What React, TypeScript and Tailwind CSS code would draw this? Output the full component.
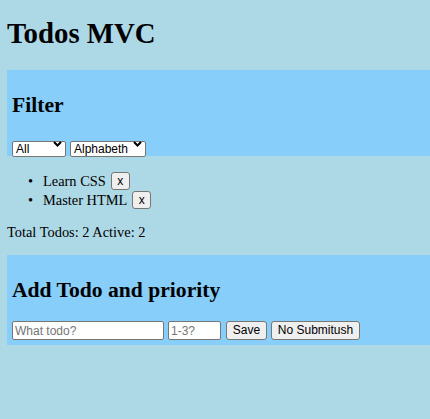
import { useState } from 'react';

interface Todo {
  id: number;
  text: string;
  done: boolean;
}

const controlFont = "font-['Liberation_Sans',Arial,sans-serif] text-[12px]";

function Chevron() {
  return (
    <svg
      className="pointer-events-none absolute right-[4px] top-1/2 -translate-y-1/2"
      width="9"
      height="6"
      viewBox="0 0 9 6"
      fill="none"
    >
      <path d="M1 1l3.5 3.5L8 1" stroke="#000" strokeWidth="2" />
    </svg>
  );
}

function Select({ width, options }: { width: string; options: string[] }) {
  return (
    <div className={`relative ${width} h-[16px]`}>
      <select
        className={`${controlFont} appearance-none w-full h-full leading-[14px] pl-[3px] pr-[14px] bg-white text-black border border-[#767676] rounded-[2px]`}
      >
        {options.map((o) => (
          <option key={o}>{o}</option>
        ))}
      </select>
      <Chevron />
    </div>
  );
}

export default function App() {
  const [todos, setTodos] = useState<Todo[]>([
    { id: 1, text: 'Learn CSS', done: false },
    { id: 2, text: 'Master HTML', done: false },
  ]);

  const removeTodo = (id: number) => {
    setTodos(todos.filter((t) => t.id !== id));
  };

  const active = todos.filter((t) => !t.done).length;

  return (
    <div className="min-h-screen bg-[#add8e6] text-black font-['Liberation_Serif','Times_New_Roman',serif] pt-[17px]">
      <h1 className="ml-[7px] text-[28.8px] leading-[33px] font-bold">Todos MVC</h1>

      <div className="mt-[20px] ml-[7px] bg-[#87cefa] pl-[5px] pt-[23px] pb-[4px]">
        <h2 className="text-[21.6px] leading-[24px] font-bold">Filter</h2>
        <div className="mt-[19px] flex gap-[4px]">
          <Select width="w-[54px]" options={['All', 'Active', 'Done']} />
          <Select width="w-[76px]" options={['Alphabeth', 'Priority']} />
        </div>
      </div>

      <ul className="mt-[15px]">
        {todos.map((todo) => (
          <li key={todo.id} className="flex items-center h-[19px] text-[14.4px]">
            <span className="w-[43px] pl-[28px] leading-[16px]">•</span>
            <span className="leading-[16px]">{todo.text}</span>
            <button
              onClick={() => removeTodo(todo.id)}
              className={`${controlFont} ml-[5px] w-[19px] h-[18px] leading-[16px] bg-[#efefef] border border-[#767676] rounded-[3px] text-black`}
            >
              x
            </button>
          </li>
        ))}
      </ul>

      <p className="mt-[15px] ml-[7px] text-[14.4px] leading-[16px]">
        Total Todos: {todos.length} Active: {active}
      </p>

      <div className="mt-[15px] ml-[7px] bg-[#87cefa] pl-[5px] pt-[23px] pb-[5px]">
        <h2 className="text-[21.6px] leading-[24px] font-bold">Add Todo and priority</h2>
        <form className="mt-[19px] flex items-center gap-[4px]" onSubmit={(e) => e.preventDefault()}>
          <input
            placeholder="What todo?"
            className={`${controlFont} w-[152px] h-[19px] px-[2px] bg-white border border-[#767676] rounded-[2px] placeholder:text-[#757575]`}
          />
          <input
            placeholder="1-3?"
            className={`${controlFont} w-[53px] h-[19px] px-[2px] bg-white border border-[#767676] rounded-[2px] placeholder:text-[#757575]`}
          />
          <button
            type="submit"
            className={`${controlFont} ml-[1px] w-[41px] h-[19px] leading-[17px] bg-[#efefef] border border-[#767676] rounded-[3px]`}
          >
            Save
          </button>
          <button
            type="button"
            className={`${controlFont} w-[89px] h-[19px] leading-[17px] bg-[#efefef] border border-[#767676] rounded-[3px]`}
          >
            No Submitush
          </button>
        </form>
      </div>
    </div>
  );
}
